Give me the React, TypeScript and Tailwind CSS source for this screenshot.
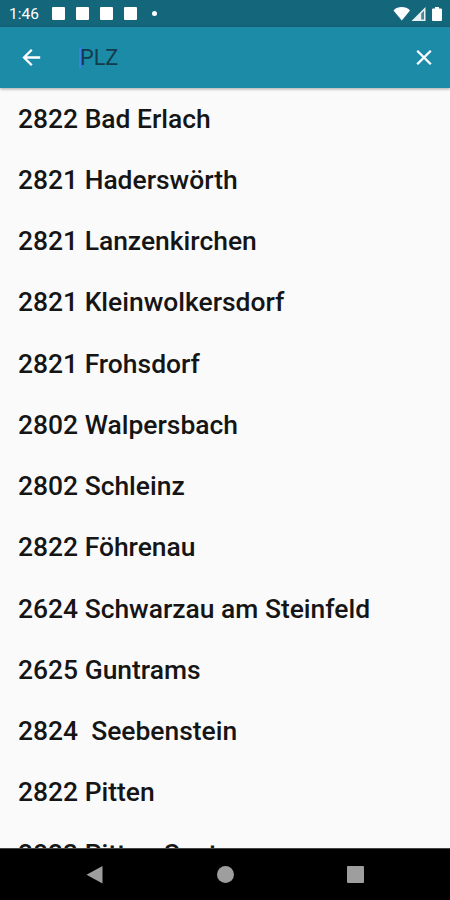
const places = [
  "2822 Bad Erlach",
  "2821 Haderswörth",
  "2821 Lanzenkirchen",
  "2821 Kleinwolkersdorf",
  "2821 Frohsdorf",
  "2802 Walpersbach",
  "2802 Schleinz",
  "2822 Föhrenau",
  "2624 Schwarzau am Steinfeld",
  "2625 Guntrams",
  "2824  Seebenstein",
  "2822 Pitten",
  "2823 Pitten-Sautern",
];

function StatusBar() {
  return (
    <div className="flex h-[27px] shrink-0 items-center bg-[#14667b] pr-[7px] pl-[9px] text-white">
      <span className="w-[43px] pt-[2px] text-[15.5px] leading-none">1:46</span>
      <div className="flex gap-[11px]">
        {[0, 1, 2, 3].map((n) => (
          <span key={n} className="h-[13px] w-[13px] rounded-[1px] bg-white" />
        ))}
      </div>
      <span className="ml-[15px] h-[5px] w-[5px] rounded-full bg-white" />
      <svg className="ml-auto" width="50" height="16" viewBox="0 0 50 16" fill="#fff">
        <path d="M0.500 4.400C5 0 12.500 0 17 4.400L8.800 14.500Z" />
        <path d="M18.500 15L32.500 1V15Z" fillOpacity="0.9" />
        <path d="M28.200 7.500L31 4.800V13.500H28.200Z" fill="#14667b" fillOpacity="0.75" />
        <path d="M42 1h4v1.500h1.800c.6 0 1.200.5 1.200 1.200v10c0 .7-.5 1.300-1.200 1.300h-7.600c-.7 0-1.200-.6-1.200-1.300v-10c0-.7.6-1.200 1.200-1.200H42z" />
      </svg>
    </div>
  );
}

function SearchBar() {
  return (
    <div className="z-10 flex h-[61px] shrink-0 items-center bg-[#1c8ba8] pr-[14px] pl-[19px] shadow-[0_1px_3px_rgba(0,0,0,0.35)]">
      <svg width="24" height="24" viewBox="0 0 24 24" fill="none" stroke="#fff" strokeWidth="2.3">
        <path d="M21.200 11.500H5.500M12.800 3.700L5 11.500l7.800 7.800" />
      </svg>
      <div className="ml-[36px] flex flex-1 items-center">
        <span className="-mr-px h-[21px] w-[2px] bg-[#3d7fe8]" />
        <span className="pt-px text-[21.700px] leading-none text-[#123c4a]">PLZ</span>
      </div>
      <svg width="24" height="24" viewBox="0 0 24 24" fill="none" stroke="#fff" strokeWidth="2.3">
        <path d="M5.200 4.700l13.600 13.600M18.800 4.700L5.200 18.300" />
      </svg>
    </div>
  );
}

function NavBar() {
  return (
    <div className="flex h-[52px] shrink-0 items-center justify-between border-t border-[#444] bg-black px-[86px] text-[#9e9e9e]">
      <svg width="17" height="18" viewBox="0 0 17 18" fill="currentColor">
        <path d="M0.500 8.700L16.500 0V17.400Z" />
      </svg>
      <span className="h-[17px] w-[17px] rounded-full bg-[#9e9e9e]" />
      <span className="h-[17px] w-[17px] rounded-[1px] bg-[#9e9e9e]" />
    </div>
  );
}

export default function App() {
  return (
    <div className="flex h-[900px] w-[450px] flex-col overflow-hidden bg-[#fafafa] font-[Roboto,sans-serif]">
      <StatusBar />
      <SearchBar />
      <ul className="min-h-0 flex-1 overflow-hidden">
        {places.map((p) => (
          <li key={p} className="flex h-[61.25px] items-center whitespace-pre pl-[18px] text-[26.43px] leading-[30px] font-[550] text-[#151515]">
            {p}
          </li>
        ))}
      </ul>
      <NavBar />
    </div>
  );
}
